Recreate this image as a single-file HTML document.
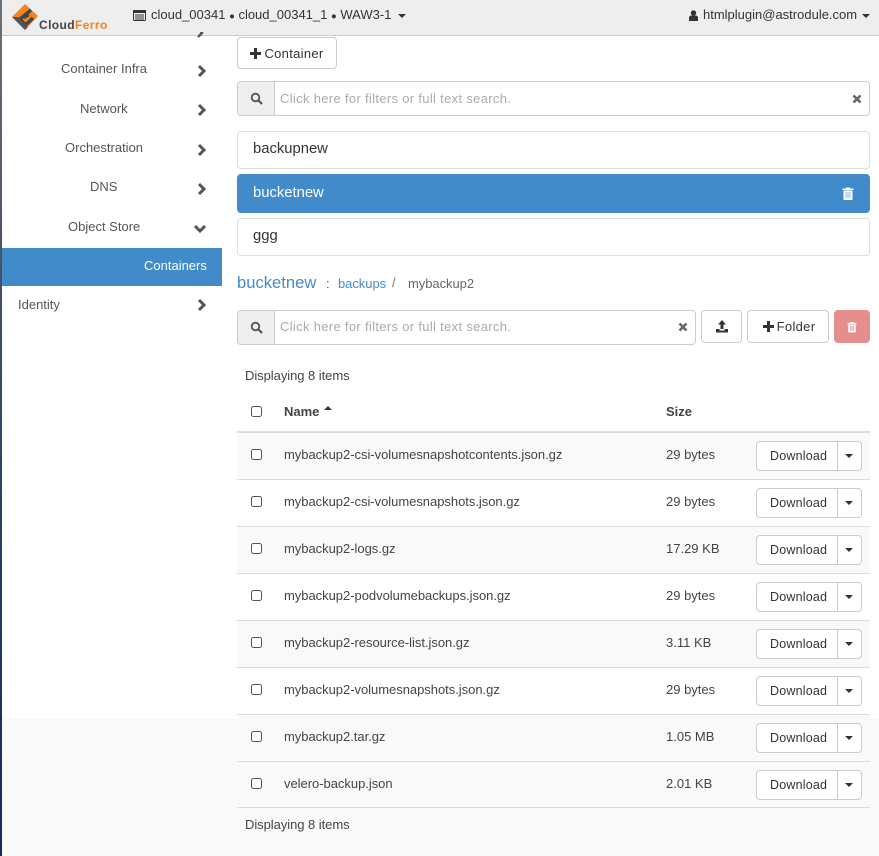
<!DOCTYPE html>
<html><head><meta charset="utf-8"><style>
*{box-sizing:border-box}
html,body{margin:0;padding:0;width:879px;height:856px;overflow:hidden;background:#f9f9f9}
body{position:relative;font-family:"Liberation Sans",sans-serif;font-size:13px;color:#444}
.a{position:absolute;white-space:nowrap}
.btn{position:absolute;background:#fff;border:1px solid #ccc;border-radius:4px;color:#333;font-size:13px;letter-spacing:.3px;display:flex;align-items:center;justify-content:center;white-space:nowrap}
.side{font-size:13px;color:#555;line-height:16px}
.chev{position:absolute}
.inp{position:absolute;border:1px solid #ccc;border-radius:4px;background:#fff;height:34px;color:#aaa;font-size:13px;letter-spacing:.32px}
.addon{position:absolute;left:0;top:0;bottom:0;width:37px;background:#eee;border-right:1px solid #ccc;border-radius:3px 0 0 3px}
.ph{position:absolute;left:42px;top:8px;line-height:16px}
.li{position:absolute;left:237px;width:633px;border:1px solid #ddd;border-radius:4px;background:#fff;font-size:14.8px;padding-left:15px;color:#333}
.row{position:absolute;left:237px;width:633px;height:47px;border-bottom:1px solid #ddd}
.row.s{background:#f9f9f9}
.cb{position:absolute;left:14px;top:16px;width:11px;height:11px;border:1.5px solid #555;border-radius:2.5px;background:#fff}
.nm{position:absolute;left:47px;top:14px;font-size:13px;line-height:16px;color:#444;white-space:nowrap;letter-spacing:-.03px}
.sz{position:absolute;left:429px;top:14px;font-size:13px;line-height:16px;color:#444;white-space:nowrap}
.dl{position:absolute;left:519px;top:8px;width:106px;height:30px;border:1px solid #ccc;border-radius:4px;background:#fff}
.dl b{position:absolute;left:13px;top:6px;font-weight:400;font-size:12.5px;line-height:16px;letter-spacing:.2px;color:#333}
.dl i{position:absolute;left:80px;top:0;bottom:0;width:1px;background:#ccc}
.car{position:absolute;width:0;height:0;border-left:4px solid transparent;border-right:4px solid transparent;border-top:4px solid #333}
.dl .car{left:88px;top:12px}
</style></head><body>
<div class="a" style="left:0;top:0;width:2px;height:856px;background:linear-gradient(#6d7076 0,#4a5468 30%,#2a3f66 60%,#0f2c5c 100%)"></div>
<div class="a" style="left:2px;top:36px;width:877px;height:683px;background:#fff"></div>

<div class="a" style="left:2px;top:0;width:877px;height:36px;background:#eee;border-bottom:1px solid #ccc"></div>
<svg class="a" style="left:12px;top:4px" width="28" height="27" viewBox="0 0 28 27">
<polygon points="13,0 26,12 13,26 0,13" fill="#f58220"/>
<path d="M19 6 L8 15 L13.500 21 L21 14" fill="none" stroke="#444" stroke-width="3.400"/>
<path d="M0 13 L13 26 L16 23 L6 13z" fill="#555"/>
<path d="M12 14 L17 11" stroke="#444" stroke-width="2.500"/>
</svg>
<div class="a" style="left:39px;top:17px;font-size:12px;font-weight:700;line-height:16px;color:#444;letter-spacing:.4px">Cloud<span style="color:#f58220">Ferro</span></div>
<svg class="a" style="left:133px;top:10px" width="13" height="11" viewBox="0 0 13 11"><rect x=".5" y=".5" width="12" height="10" rx="1" fill="#eee" stroke="#333"/><rect x="0" y="0" width="13" height="3" fill="#333"/><path d="M2 5h9M2 7h9M2 9h9" stroke="#333"/></svg>
<div class="a" style="left:151px;top:7px;font-size:13px;line-height:16px;color:#333">cloud_00341 <span style="font-size:9.500px">&#9679;</span> cloud_00341_1 <span style="font-size:9.500px">&#9679;</span> WAW3-1</div>
<div class="car" style="left:398px;top:14px"></div>
<svg class="a" style="left:689px;top:10px" width="9" height="11" viewBox="0 0 9 11"><circle cx="4.500" cy="3" r="2.700" fill="#333"/><path d="M0 11V8q0-2.500 2.500-2.500h4Q9 5.500 9 8v3z" fill="#333"/></svg>
<div class="a" style="left:703px;top:7px;font-size:13px;line-height:16px;color:#333">htmlplugin@astrodule.com</div>
<div class="car" style="left:862px;top:14px"></div>

<div class="a side" style="left:61px;top:61px">Container Infra</div>
<div class="a side" style="left:80px;top:101px">Network</div>
<div class="a side" style="left:65px;top:140px">Orchestration</div>
<div class="a side" style="left:90px;top:179px">DNS</div>
<div class="a side" style="left:68px;top:219px">Object Store</div>
<div class="a" style="left:2px;top:248px;width:220px;height:38px;background:#428bca"></div>
<div class="a side" style="left:144px;top:258px;color:#fff">Containers</div>
<div class="a side" style="left:18px;top:297px">Identity</div>
<svg class="a" style="left:195px;top:32px" width="12" height="6"><path d="M3 -4L7 1L3 5" fill="none" stroke="#555" stroke-width="2.500"/></svg>
<svg class="chev" style="left:197px;top:64px" width="10" height="14"><path d="M2 2L7 7L2 12" fill="none" stroke="#555" stroke-width="3"/></svg>
<svg class="chev" style="left:197px;top:103px" width="10" height="14"><path d="M2 2L7 7L2 12" fill="none" stroke="#555" stroke-width="3"/></svg>
<svg class="chev" style="left:197px;top:143px" width="10" height="14"><path d="M2 2L7 7L2 12" fill="none" stroke="#555" stroke-width="3"/></svg>
<svg class="chev" style="left:197px;top:182px" width="10" height="14"><path d="M2 2L7 7L2 12" fill="none" stroke="#555" stroke-width="3"/></svg>
<svg class="chev" style="left:193px;top:224px" width="14" height="10"><path d="M2 2L7 7L12 2" fill="none" stroke="#555" stroke-width="3"/></svg>
<svg class="chev" style="left:197px;top:298px" width="10" height="14"><path d="M2 2L7 7L2 12" fill="none" stroke="#555" stroke-width="3"/></svg>

<div class="btn" style="left:237px;top:37px;width:100px;height:32px"><svg width="11" height="11" style="margin-right:3px"><path d="M5.500 0v11M0 5.500h11" stroke="#333" stroke-width="3"/></svg>Container</div>

<div class="inp" style="left:237px;top:81px;width:633px;height:35px"><div class="addon"></div><div class="ph" style="top:9px">Click here for filters or full text search.</div>
<svg class="a" style="left:12px;top:10px" width="13" height="13" viewBox="0 0 13 13"><circle cx="5.500" cy="5.500" r="3.800" fill="none" stroke="#555" stroke-width="1.800"/><path d="M8.500 8.500L12 12" stroke="#555" stroke-width="2.200"/></svg>
<svg class="a" style="left:614px;top:12px" width="10" height="10"><path d="M1.500 1.500L8.500 8.500M8.500 1.500L1.500 8.500" stroke="#666" stroke-width="2.600"/></svg></div>

<div class="li" style="top:131px;height:38px;line-height:35px">backupnew</div>
<div class="li" style="top:174px;height:39px;line-height:37px;background:#428bca;border-color:#428bca;color:#fff">bucketnew
<svg class="a" style="left:604px;top:12px" width="12" height="13" viewBox="0 0 12 13"><path d="M4 1.500V.500h4v1h3.500v1.500H.500V1.500z" fill="#fff"/><path d="M1.500 3.500h9V13h-9z" fill="#fff"/><path d="M4 5v6M6 5v6M8 5v6" stroke="#8db9df" stroke-width="1"/></svg></div>
<div class="li" style="top:218px;height:38px;line-height:35px">ggg</div>

<div class="a" style="left:237px;top:274px;font-size:16.600px;line-height:18px;color:#428bca">bucketnew</div>
<div class="a" style="left:326px;top:276px;font-size:13px;line-height:16px;color:#555">:</div>
<div class="a" style="left:338px;top:276px;font-size:13px;line-height:16px;color:#428bca;letter-spacing:-.05px">backups</div>
<div class="a" style="left:392px;top:275px;font-size:13px;line-height:16px;color:#777">/</div>
<div class="a" style="left:408px;top:276px;font-size:13px;line-height:16px;color:#666;letter-spacing:-.05px">mybackup2</div>

<div class="inp" style="left:237px;top:310px;width:459px;height:35px"><div class="addon"></div><div class="ph">Click here for filters or full text search.</div>
<svg class="a" style="left:12px;top:10px" width="13" height="13" viewBox="0 0 13 13"><circle cx="5.500" cy="5.500" r="3.800" fill="none" stroke="#555" stroke-width="1.800"/><path d="M8.500 8.500L12 12" stroke="#555" stroke-width="2.200"/></svg>
<svg class="a" style="left:440px;top:11px" width="10" height="10"><path d="M1.500 1.500L8.500 8.500M8.500 1.500L1.500 8.500" stroke="#666" stroke-width="2.600"/></svg></div>
<div class="btn" style="left:701px;top:310px;width:41px;height:33px"><svg width="12" height="13" viewBox="0 0 12 13"><path d="M6 0L10 4.500H7.500V9h-3V4.500H2z" fill="#333"/><path d="M0 9h3.500v1.500h5V9H12v3.500H0z" fill="#333"/></svg></div>
<div class="btn" style="left:747px;top:310px;width:82px;height:33px;padding-left:2px"><svg width="11" height="11" style="margin-right:3px"><path d="M5.500 0v11M0 5.500h11" stroke="#333" stroke-width="3"/></svg>Folder</div>
<div class="btn" style="left:834px;top:310px;width:36px;height:33px;background:#e58e8c;border-color:#e58e8c"><svg width="10" height="12" viewBox="0 0 12 13"><path d="M4 1.500V.500h4v1h3.500v1.500H.500V1.500z" fill="#fff"/><path d="M1.500 3.500h9V13h-9z" fill="#fff"/><path d="M4 5v6M6 5v6M8 5v6" stroke="#e58e8c" stroke-width="1"/></svg></div>

<div class="a" style="left:245px;top:368px;font-size:13px;line-height:16px;color:#444;letter-spacing:-.05px">Displaying 8 items</div>
<div class="a" style="left:251px;top:406px;width:11px;height:11px;border:1.500px solid #555;border-radius:2.500px"></div>
<div class="a" style="left:284px;top:404px;font-size:13px;font-weight:700;line-height:16px;color:#444">Name</div>
<div class="car" style="left:324px;top:406px;border-top:0;border-bottom:4px solid #333"></div>
<div class="a" style="left:666px;top:404px;font-size:13px;font-weight:700;line-height:16px;color:#444">Size</div>
<div class="a" style="left:237px;top:431px;width:633px;height:2px;background:#ddd"></div>

<div class="row s" style="top:433px"><div class="cb"></div><div class="nm">mybackup2-csi-volumesnapshotcontents.json.gz</div><div class="sz">29 bytes</div><div class="dl"><b>Download</b><i></i><div class="car"></div></div></div>
<div class="row" style="top:480px"><div class="cb"></div><div class="nm">mybackup2-csi-volumesnapshots.json.gz</div><div class="sz">29 bytes</div><div class="dl"><b>Download</b><i></i><div class="car"></div></div></div>
<div class="row s" style="top:527px"><div class="cb"></div><div class="nm">mybackup2-logs.gz</div><div class="sz">17.29 KB</div><div class="dl"><b>Download</b><i></i><div class="car"></div></div></div>
<div class="row" style="top:574px"><div class="cb"></div><div class="nm">mybackup2-podvolumebackups.json.gz</div><div class="sz">29 bytes</div><div class="dl"><b>Download</b><i></i><div class="car"></div></div></div>
<div class="row s" style="top:621px"><div class="cb"></div><div class="nm">mybackup2-resource-list.json.gz</div><div class="sz">3.11 KB</div><div class="dl"><b>Download</b><i></i><div class="car"></div></div></div>
<div class="row" style="top:668px"><div class="cb"></div><div class="nm">mybackup2-volumesnapshots.json.gz</div><div class="sz">29 bytes</div><div class="dl"><b>Download</b><i></i><div class="car"></div></div></div>
<div class="row s" style="top:715px"><div class="cb"></div><div class="nm">mybackup2.tar.gz</div><div class="sz">1.05 MB</div><div class="dl"><b>Download</b><i></i><div class="car"></div></div></div>
<div class="row" style="top:762px;height:46px"><div class="cb"></div><div class="nm">velero-backup.json</div><div class="sz">2.01 KB</div><div class="dl"><b>Download</b><i></i><div class="car"></div></div></div>

<div class="a" style="left:245px;top:817px;font-size:13px;line-height:16px;color:#444;letter-spacing:-.05px">Displaying 8 items</div>
</body></html>
